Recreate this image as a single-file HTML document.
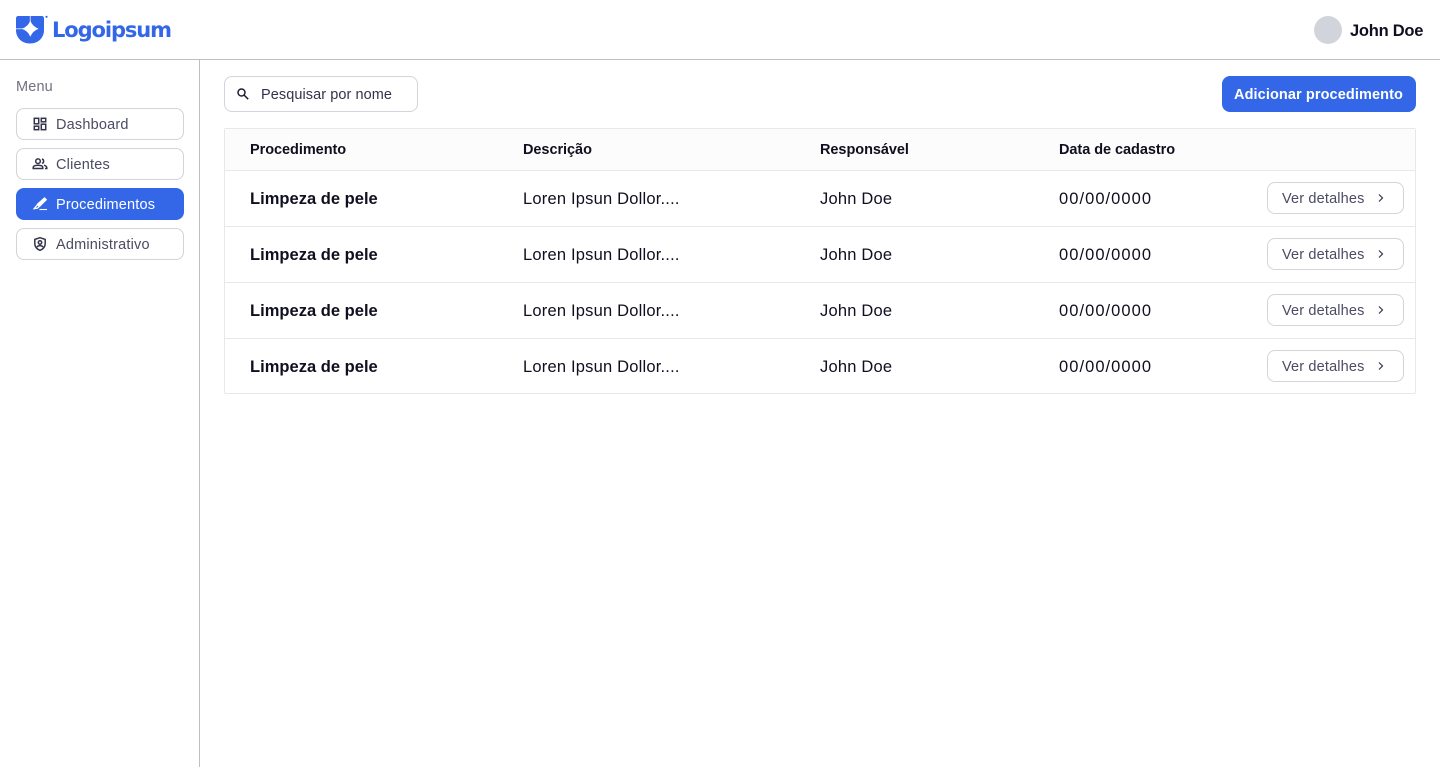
<!DOCTYPE html>
<html lang="pt">
<head>
<meta charset="utf-8">
<title>Procedimentos</title>
<style>
html,body{margin:0;padding:0;background:#fff;}
body{width:1440px;height:767px;position:relative;overflow:hidden;font-family:"Liberation Sans",sans-serif;color:#0f0f1f;}
.a{position:absolute;white-space:nowrap;}
.t{line-height:20px;}
.line{position:absolute;background:#bfbfbf;}
.nav{position:absolute;left:16px;width:166px;height:30px;border:1px solid #d1d5db;border-radius:8px;background:#fff;}
.nav.on{background:#3367e8;border-color:#3367e8;}
.nav svg{position:absolute;left:15px;top:7px;}
.nav span{position:absolute;left:39px;top:6px;font-size:14.5px;line-height:20px;color:#4b4b63;letter-spacing:.19px;white-space:nowrap;}
.nav.on span{color:#fff;}
.table{position:absolute;left:224px;top:128px;width:1190px;height:264px;border:1px solid #e8e8e8;border-radius:2px;}
.head{position:absolute;left:0;top:0;width:1190px;height:41px;background:#fcfcfc;border-bottom:1px solid #e8e8e8;}
.rowline{position:absolute;left:0;width:1190px;height:1px;background:#e8e8e8;}
.th{font-size:14.5px;font-weight:bold;letter-spacing:-.05px;top:140px;color:#0f0f1f;}
.c1{font-size:16.5px;font-weight:bold;letter-spacing:.02px;left:250px;}
.c{font-size:16.5px;letter-spacing:.2px;}
.d{font-size:16.5px;letter-spacing:1.05px;left:1059px;}
.btn{position:absolute;left:1267px;width:135px;height:30px;border:1px solid #d1d5db;border-radius:8px;background:#fff;}
.btn span{position:absolute;left:14px;top:6px;font-size:14.5px;line-height:20px;letter-spacing:.16px;color:#4b4b63;white-space:nowrap;}
.btn svg{position:absolute;left:106px;top:8px;}
</style>
</head>
<body>
<svg class="a" style="left:16px;top:15px" width="32" height="30" viewBox="0 0 32 30">
<path d="M0 3.500Q0 1 2.500 1H25.500Q28 1 28 3.500V15C28 23 22 28.500 14 28.500S0 23 0 15Z" fill="#3367e8"/>
<path d="M14.300 1V8M0 13.800H8" stroke="#c3d1f5" stroke-width="1" fill="none"/>
<path d="M14.300 5.800Q16.600 11.500 22.600 13.800Q16.600 16.100 14.300 21.800Q12 16.100 6 13.800Q12 11.500 14.300 5.800Z" fill="#fff"/>
<circle cx="30.500" cy="1.800" r="1.100" fill="#3367e8"/>
</svg>
<div class="a" style="left:52px;top:16px;font-family:'DejaVu Sans',sans-serif;font-weight:bold;font-size:21px;line-height:28px;color:#3367e8;letter-spacing:-1.1px;">Logoipsum</div>

<div class="a" style="left:1314px;top:16px;width:28px;height:28px;border-radius:50%;background:#d1d5db;"></div>
<div class="a t" style="left:1350px;top:21px;font-size:16.5px;font-weight:bold;letter-spacing:-.25px;color:#0f0f1f;">John Doe</div>

<div class="line" style="left:0;top:59px;width:1440px;height:1px;"></div>
<div class="line" style="left:199px;top:60px;width:1px;height:707px;"></div>

<div class="a t" style="left:16px;top:77px;font-size:14.5px;color:#71717f;letter-spacing:.16px;">Menu</div>

<div class="nav" style="top:108px;">
<svg width="16" height="16" viewBox="0 0 16 16" fill="none" stroke="#33334a" stroke-width="1.500"><rect x="2.300" y="2.300" width="4.400" height="5.500"/><rect x="9.300" y="2.300" width="4.400" height="3.500"/><rect x="9.300" y="8.200" width="4.400" height="5.500"/><rect x="2.300" y="10.200" width="4.400" height="3.500"/></svg>
<span>Dashboard</span></div>
<div class="nav" style="top:148px;">
<svg width="16" height="16" viewBox="0 0 16 16" fill="none" stroke="#33334a" stroke-width="1.500"><circle cx="6" cy="5.200" r="2.300"/><path d="M1.200 12.500V11.500C1.200 10 3.200 9.200 6 9.200S10.800 10 10.800 11.500V12.500Z"/><path d="M10 3A2.300 2.300 0 0 1 10 7.400M12 9.200C13.700 9.700 14.800 10.500 14.800 11.800V12.500H13"/></svg>
<span>Clientes</span></div>
<div class="nav on" style="top:188px;">
<svg width="16" height="16" viewBox="0 0 16 16" fill="none" stroke="#fff" stroke-width="1.300"><path d="M12.500 2L14.200 3.700L8 9.800L5.900 7.900Z" fill="#fff"/><path d="M5.400 8.600L7.300 10.500L5.200 12.200L2.200 12.600Z"/><path d="M7.500 13.500H15" stroke-width="1.100"/></svg>
<span>Procedimentos</span></div>
<div class="nav" style="top:228px;">
<svg width="16" height="16" viewBox="0 0 16 16" fill="none" stroke="#33334a" stroke-width="1.500"><path d="M8 1.700L13.200 3.400V7.500C13.200 10.800 11 13.200 8 14.300C5 13.200 2.800 10.800 2.800 7.500V3.400Z"/><circle cx="8" cy="6.500" r="1.700"/><path d="M4.900 11C5.800 10 6.800 9.600 8 9.600S10.200 10 11.100 11"/></svg>
<span>Administrativo</span></div>

<div class="a" style="left:224px;top:76px;width:192px;height:34px;border:1px solid #d1d5db;border-radius:8px;background:#fff;"></div>
<svg class="a" style="left:236px;top:87px" width="14" height="14" viewBox="0 0 14 14" fill="none" stroke="#1f1f33" stroke-width="1.500"><circle cx="5.500" cy="5.500" r="3.500"/><path d="M8 8L12.200 12.200"/></svg>
<div class="a t" style="left:261px;top:85px;font-size:14.5px;letter-spacing:.07px;color:#33334a;">Pesquisar por nome</div>

<div class="a" style="left:1222px;top:76px;width:194px;height:36px;border-radius:8px;background:#3367e8;"></div>
<div class="a t" style="left:1234px;top:85px;font-size:14.5px;font-weight:bold;letter-spacing:.1px;color:#fff;">Adicionar procedimento</div>

<div class="table">
<div class="head"></div>
<div class="rowline" style="top:97px;"></div>
<div class="rowline" style="top:153px;"></div>
<div class="rowline" style="top:209px;"></div>
</div>

<div class="a t th" style="left:250px;">Procedimento</div>
<div class="a t th" style="left:523px;">Descrição</div>
<div class="a t th" style="left:820px;">Responsável</div>
<div class="a t th" style="left:1059px;">Data de cadastro</div>

<div class="a t c1" style="top:189px;">Limpeza de pele</div>
<div class="a t c" style="left:523px;top:189px;">Loren Ipsun Dollor....</div>
<div class="a t c" style="left:820px;top:189px;">John Doe</div>
<div class="a t d" style="top:189px;">00/00/0000</div>
<div class="btn" style="top:182px;"><span>Ver detalhes</span><svg width="14" height="14" viewBox="0 0 14 14" fill="none" stroke="#33334a" stroke-width="1.200"><path d="M5 3.500L8.500 7L5 10.500"/></svg></div>

<div class="a t c1" style="top:245px;">Limpeza de pele</div>
<div class="a t c" style="left:523px;top:245px;">Loren Ipsun Dollor....</div>
<div class="a t c" style="left:820px;top:245px;">John Doe</div>
<div class="a t d" style="top:245px;">00/00/0000</div>
<div class="btn" style="top:238px;"><span>Ver detalhes</span><svg width="14" height="14" viewBox="0 0 14 14" fill="none" stroke="#33334a" stroke-width="1.200"><path d="M5 3.500L8.500 7L5 10.500"/></svg></div>

<div class="a t c1" style="top:301px;">Limpeza de pele</div>
<div class="a t c" style="left:523px;top:301px;">Loren Ipsun Dollor....</div>
<div class="a t c" style="left:820px;top:301px;">John Doe</div>
<div class="a t d" style="top:301px;">00/00/0000</div>
<div class="btn" style="top:294px;"><span>Ver detalhes</span><svg width="14" height="14" viewBox="0 0 14 14" fill="none" stroke="#33334a" stroke-width="1.200"><path d="M5 3.500L8.500 7L5 10.500"/></svg></div>

<div class="a t c1" style="top:357px;">Limpeza de pele</div>
<div class="a t c" style="left:523px;top:357px;">Loren Ipsun Dollor....</div>
<div class="a t c" style="left:820px;top:357px;">John Doe</div>
<div class="a t d" style="top:357px;">00/00/0000</div>
<div class="btn" style="top:350px;"><span>Ver detalhes</span><svg width="14" height="14" viewBox="0 0 14 14" fill="none" stroke="#33334a" stroke-width="1.200"><path d="M5 3.500L8.500 7L5 10.500"/></svg></div>
</body>
</html>
